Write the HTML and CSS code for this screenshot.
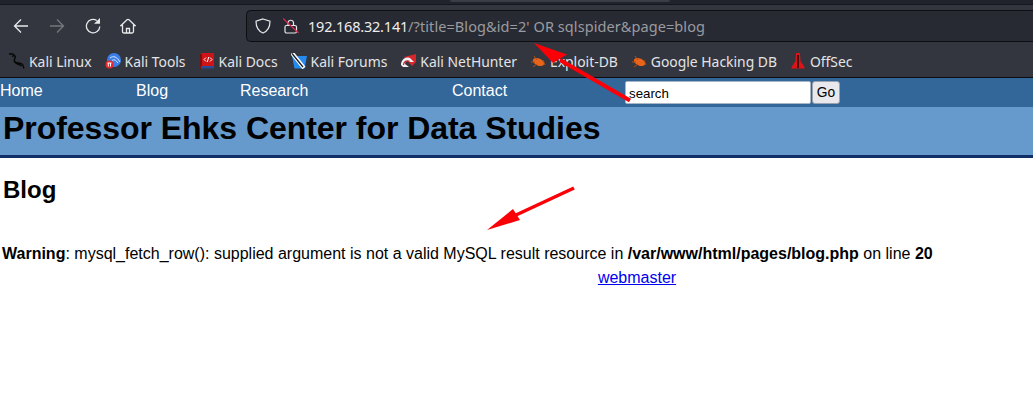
FILE: index.html
```html
<!DOCTYPE html>
<html lang="en">
<head>
<meta charset="utf-8">
<title>Blog</title>
<link rel="stylesheet" href="styles.css">
</head>
<body>
<div class="chrome">
  <div class="tabstrip"><div class="tabedge"></div></div>
  <div class="navbar">
    <div class="navbtns">
      <svg class="ni n1" viewBox="0 0 16 16"><path d="M15 8H1.500M8 1.500 1.500 8 8 14.500"/></svg>
      <svg class="ni n2 off" viewBox="0 0 16 16"><path d="M1 8H14.500M8 1.500 14.500 8 8 14.500"/></svg>
      <svg class="ni n3" viewBox="0 0 16 16"><path d="M14.800 8.500A6.700 6.700 0 1 1 11.800 2.500"/><path class="solid" d="M9 5.700H15V0Z"/></svg>
      <svg class="ni n4" viewBox="0 0 16 16"><path d="M1 7.500 7 1.800Q8 1 9 1.800L15 7.500H13.500V13.500Q13.500 15 12 15H4Q2.500 15 2.500 13.500V7.500ZM6.500 15V10.500H9.500V15"/></svg>
    </div>
    <div class="urlbar">
      <svg class="ui shield" viewBox="0 0 16 16"><path d="M8 1 15 3.200C15 9 12.800 13 8 15 3.200 13 1 9 1 3.200Z"/></svg>
      <svg class="ui lock" viewBox="0 0 16 16"><rect x="2" y="7.500" width="11.500" height="7.500" rx="1.500"/><path d="M5 7.500V4.500a2.800 2.800 0 0 1 5.500 0V7.500"/><path class="slash" d="M0 .5 15.500 15"/></svg>
      <span class="url"><span class="host">192.168.32.141</span>/?title=Blog&amp;id=2' OR sqlspider&amp;page=blog</span>
    </div>
  </div>
  <div class="bookmarks">
    <span class="bm b1"><svg class="fav" viewBox="0 0 16 16"><path class="drag" d="M0 1C3 .5 5 1 6 3 7 5 4.500 6 5.500 8.500 7 10.500 11 9.500 13 11 14.500 12 14.500 14 14.800 15.500M3 3.200 5.500 2.500M5.500 8.500C8 12 11 11 12.500 13"/></svg>Kali Linux</span>
    <span class="bm b2"><svg class="fav" viewBox="0 0 16 16"><circle cx="9" cy="7" r="7" fill="#3a7fe8"/><path d="M5 5C8 2.500 12 3.500 15 9M7 7.500C9 6 11 7 13 10" fill="none" stroke="#dbe7fb" stroke-width="1"/><circle cx="4.500" cy="11.500" r="4" fill="#e8262b"/><path d="M2.500 10H6.500M3.300 10V13.500M5.500 10V13.500" stroke="#fff" stroke-width="1" fill="none"/></svg>Kali Tools</span>
    <span class="bm b3"><svg class="fav" viewBox="0 0 16 16"><path d="M2 0H15V13H2Z" fill="#cf1418"/><path d="M1 1H3V16H1Z" fill="#7a1014"/><path d="M2 13H15V15.500H2Z" fill="#2c4b92"/><path d="M7 4.500 5 6.500 7 8.500M11 4.500 13 6.500 11 8.500M9.700 4 8.300 9" fill="none" stroke="#fff" stroke-width="1"/></svg>Kali Docs</span>
    <span class="bm b4"><svg class="fav" viewBox="0 0 16 16"><path d="M1 3H16L13.500 15.500H3.500Z" fill="#2589ee"/><path d="M1 0 13 15" stroke="#fff" stroke-width="4"/><path d="M1 .5 12 14" stroke="#1b1d24" stroke-width="1.300"/></svg>Kali Forums</span>
    <span class="bm b5"><svg class="fav" viewBox="0 0 16 16"><path d="M4 4 16 1V9L12 13Z" fill="#d8262c"/><path d="M1 12C1 6 7 2.500 11 6L14 9 10 9C8 7 5 8 5 11L9 14H3Z" fill="#f1f1f1"/><path d="M3.500 12C3.500 9 7 6.500 9.500 8.500" fill="none" stroke="#c9202a" stroke-width="1.200"/></svg>Kali NetHunter</span>
    <span class="bm b6"><svg class="fav" viewBox="0 0 16 16"><ellipse cx="8.500" cy="9" rx="6" ry="3.500" fill="#e8641a" transform="rotate(25 8.500 9)"/><path d="M4 3 7 7M1 9 5 9M3 14 7 11M13 7 15 12" stroke="#b54c10" stroke-width="1"/></svg>Exploit-DB</span>
    <span class="bm b7"><svg class="fav" viewBox="0 0 16 16"><ellipse cx="8.500" cy="9" rx="6" ry="3.500" fill="#e8641a" transform="rotate(25 8.500 9)"/><path d="M4 3 7 7M1 9 5 9M3 14 7 11M13 7 15 12" stroke="#b54c10" stroke-width="1"/></svg>Google Hacking DB</span>
    <span class="bm b8"><svg class="fav" viewBox="0 0 16 16"><path d="M6 0H10L10.500 8 14.500 14 14.500 15.500H1.500V14L5.500 8Z" fill="#dc1419"/><path d="M8 2V15" stroke="#4d0a0c" stroke-width="2"/></svg>OffSec</span>
  </div>
</div>
<div class="site">
  <div class="menu">
    <a class="mi m1">Home</a>
    <a class="mi m2">Blog</a>
    <a class="mi m3">Research</a>
    <a class="mi m4">Contact</a>
    <form class="searchform">
      <input class="search" type="text" value="search">
      <button class="go" type="button">Go</button>
    </form>
  </div>
  <div class="banner"><h1>Professor Ehks Center for Data Studies</h1></div>
  <div class="content">
    <h2>Blog</h2>
    <p class="warn"><b>Warning</b>: mysql_fetch_row(): supplied argument is not a valid MySQL result resource in <b>/var/www/html/pages/blog.php</b> on line <b>20</b></p>
    <p class="foot"><a href="#">webmaster</a></p>
  </div>
</div>
<svg class="arrow" width="1033" height="411" viewBox="0 0 1033 411">
  <path d="M630 100.500 560 60" stroke="#fb0007" stroke-width="4" fill="none"/>
  <path d="M534 43 567 54.500 553 63Z" fill="#fb0007"/>
  <path d="M574 188 516 215" stroke="#fb0007" stroke-width="3.500" fill="none"/>
  <path d="M487 230 513 209 520 220Z" fill="#fb0007"/>
</svg>
</body>
</html>
```
FILE: styles.css
```css
* { box-sizing: border-box; }
html, body { margin: 0; padding: 0; background: #fff; }
body { font-family: "Liberation Sans", Arial, sans-serif; color: #000; position: relative; height: 411px; overflow: hidden; }
.chrome { background: #33363f; height: 78px; border-bottom: 1px solid #0c0c10; font-family: "Noto Sans", sans-serif; color: #e4e4e6; }
.tabstrip { height: 5px; background: #21232c; border-bottom: 1px solid #16171d; }
.tabedge { width: 220px; height: 2px; margin-left: 450px; background: #3a3c46; border-radius: 0 0 3px 3px; }
.navbar { height: 37px; padding-top: 5px; display: flex; align-items: center; background: #33363f; }
.navbtns { display: flex; align-items: center; width: 246px; flex: none; padding-left: 13px; }
.ni { width: 16px; height: 16px; fill: none; stroke: #e8e8ea; stroke-width: 1.300; flex: none; }
.ni.off { stroke: #75777d; }
.ni .solid { fill: #e8e8ea; stroke: none; }
.n2 { margin-left: 20px; }
.n3 { margin-left: 20px; }
.n4 { margin-left: 19px; }
.urlbar { height: 32px; width: 787px; background: #282a33; border: 1px solid #0d0e12; border-right: 0; border-radius: 5px 0 0 5px; display: flex; align-items: center; padding-left: 8px; font-size: 14.500px; color: #9a9ba0; }
.ui { width: 16px; height: 16px; fill: none; stroke: #e8e8ea; stroke-width: 1.200; flex: none; }
.lock { margin-left: 12px; }
.slash { stroke: #e22850; }
.url { margin-left: 9px; white-space: nowrap; letter-spacing: .08px; }
.host { color: #eeeeef; letter-spacing: -.2px; }
.bookmarks { height: 35px; padding-top: 3px; display: flex; align-items: center; padding-left: 9px; font-size: 13.900px; white-space: nowrap; }
.bm { display: flex; align-items: center; margin-right: 13px; }
.fav { width: 16px; height: 16px; margin-right: 4px; flex: none; }
.drag { fill: none; stroke: #08080b; stroke-width: 1.500; }
.site { display: block; }
.menu { background: #336699; height: 29px; display: flex; align-items: flex-start; }
.mi { display: block; color: #fff; font-size: 16px; line-height: 18px; margin-top: 4px; flex: none; }
.m1 { width: 136px; }
.m2 { width: 104px; }
.m3 { width: 212px; }
.m4 { width: 173px; }
.searchform { display: flex; align-items: center; margin-top: 3px; }
.search { width: 186px; height: 23px; border: 1px solid #a9b6c6; border-radius: 2px; padding: 4px 3px 2px; font: 13.300px "Liberation Sans", Arial, sans-serif; color: #000; background: #fff; }
.go { height: 23px; width: 28px; margin-left: 1px; border: 1px solid #9aa3b0; border-radius: 3px; background: #e9e9ed; font: 13.800px "Liberation Sans", Arial, sans-serif; color: #000; padding: 0; }
.banner { background: #6699cc; height: 51px; border-bottom: 3px solid #0f2f66; padding: 3px 0 0 3px; }
h1 { margin: 0; font-size: 32px; line-height: 36px; font-weight: bold; letter-spacing: -.05px; }
.content { padding: 0 2px; }
h2 { margin: 18px 0 0 1px; font-size: 24px; line-height: 28px; font-weight: bold; }
.warn { margin: 41px 0 0; font-size: 16px; line-height: 18px; white-space: nowrap; }
.foot { margin: 6px 0 0; padding-left: 241px; font-size: 16px; line-height: 18px; text-align: center; }
.foot a { color: #0000ee; }
.arrow { position: absolute; left: 0; top: 0; pointer-events: none; }
```
